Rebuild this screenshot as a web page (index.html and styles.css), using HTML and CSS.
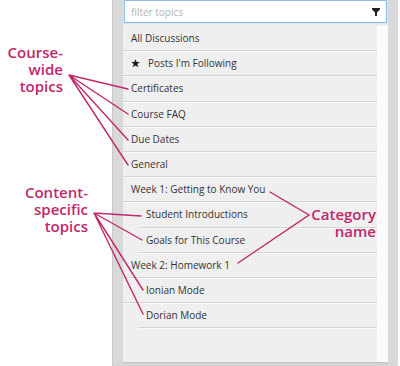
FILE: index.html
```html
<!DOCTYPE html>
<html lang="en">
<head>
    <meta charset="UTF-8">
    <meta name="viewport" content="width=device-width, initial-scale=1.0">
    <title>Discussion topics</title>
    <link rel="stylesheet" href="styles.css">
</head>
<body>

    <div class="page">
        <!-- Espacio de las etiquetas -->
        <div class="gutter"></div>

        <!-- Barra lateral de temas -->
        <div class="sidebar">
            <div class="filter">
                <input type="text" class="filter-input" placeholder="filter topics">
                <svg class="funnel" width="8" height="8" viewBox="0 0 8 8">
                    <path d="M0 0H8V1.6L5 4.4V8H3V4.4L0 1.6Z" fill="#222"/>
                </svg>
            </div>

            <div class="topics-area">
                <ul class="topics">
                    <li>All Discussions</li>
                    <li>
                        <svg class="star" width="9" height="9" viewBox="0 0 10 10">
                            <path d="M5 0.2L6.3 3.4H9.8L7 5.6L8.1 9.3L5 7.1L1.9 9.3L3 5.6L0.2 3.4H3.7Z" fill="#1e1e1e"/>
                        </svg>
                        Posts I'm Following
                    </li>
                    <li>Certificates</li>
                    <li>Course FAQ</li>
                    <li>Due Dates</li>
                    <li>General</li>
                    <li>Week 1: Getting to Know You</li>
                    <li class="inset">Student Introductions</li>
                    <li class="inset">Goals for This Course</li>
                    <li>Week 2: Homework 1</li>
                    <li class="sub">Ionian Mode</li>
                    <li class="inset">Dorian Mode</li>
                </ul>
                <div class="track"></div>
            </div>
        </div>
    </div>

    <!-- Etiquetas y líneas de las anotaciones -->
    <div class="callouts">
        <svg class="leaders" width="400" height="366" viewBox="0 0 400 366">
            <g stroke="#c0286b" stroke-width="1.4" fill="none" stroke-linecap="round">
                <path d="M69 75L128 89M69 75L128 114M69 75L128 140M69 75L128 165"/>
                <path d="M94 213L141 216M94 213L142 240M94 213L143 290M94 213L143 314"/>
                <path d="M270 192L309 215L238 263"/>
            </g>
        </svg>
        <div class="callout callout-course">Course-<br>wide<br>topics</div>
        <div class="callout callout-content">Content-<br>specific<br>topics</div>
        <div class="callout callout-category">Category<br>name</div>
    </div>

</body>
</html>
```

FILE: styles.css
```css
/* Estilos generales */
body {
    margin: 0;
    width: 400px;
    height: 366px;
    position: relative;
    overflow: hidden;
    background-color: #fff;
    font-family: "Open Sans", "Liberation Sans", sans-serif;
    color: #333;
}

.page {
    display: flex;
    height: 366px;
}

.gutter {
    width: 112px;
    border-right: 1px solid #c9c9c9;
}

/* Barra lateral */
.sidebar {
    width: 265px;
    border-left: 10px solid #d9d9d9;
    border-right: 10px solid #d9d9d9;
    border-bottom: 3px solid #d4d4d4;
    background-color: #eeeeee;
    display: flex;
    flex-direction: column;
}

/* Filtro */
.filter {
    margin: 0 1px;
    height: 23px;
    box-sizing: border-box;
    border: 1px solid #8fbbe6;
    box-shadow: 0 0 2px #b5d4f2;
    background-color: #fff;
    display: flex;
    align-items: center;
    padding: 0 6px;
}
.filter-input {
    flex: 1;
    min-width: 0;
    border: none;
    outline: none;
    padding: 0;
    background: transparent;
    font-family: inherit;
    font-size: 10px;
    color: #333;
}
.filter-input::placeholder {
    color: #b4b4b4;
}
.funnel {
    display: block;
}

/* Lista de temas */
.topics-area {
    flex: 1;
    display: flex;
    margin-top: 3px;
    border-bottom: 1px solid #c2c2c2;
}
.topics {
    list-style: none;
    margin: 0;
    padding: 0;
    width: 254px;
    background-color: #efefef;
}
.topics li {
    height: 25.2px;
    box-sizing: border-box;
    display: flex;
    align-items: center;
    padding-left: 8px;
    font-size: 10px;
    border-bottom: 1px solid #d5d5d5;
    box-shadow: 0 1px 0 #f8f8f8;
    white-space: nowrap;
}
.topics li.sub {
    padding-left: 23px;
}
.topics li.inset {
    margin-left: 15px;
    padding-left: 8px;
}
.star {
    margin-right: 8px;
}
.track {
    flex: 1;
    background-color: #fbfbfb;
}

/* Anotaciones */
.callouts {
    position: absolute;
    top: 0;
    left: 0;
    width: 400px;
    height: 366px;
    pointer-events: none;
}
.leaders {
    position: absolute;
    top: 0;
    left: 0;
}
.callout {
    position: absolute;
    font-size: 15px;
    font-weight: 600;
    line-height: 17px;
    color: #c0286b;
    text-align: right;
}
.callout-course {
    right: 337px;
    top: 44px;
}
.callout-content {
    right: 312px;
    top: 184px;
}
.callout-category {
    right: 24px;
    top: 206px;
}
```
